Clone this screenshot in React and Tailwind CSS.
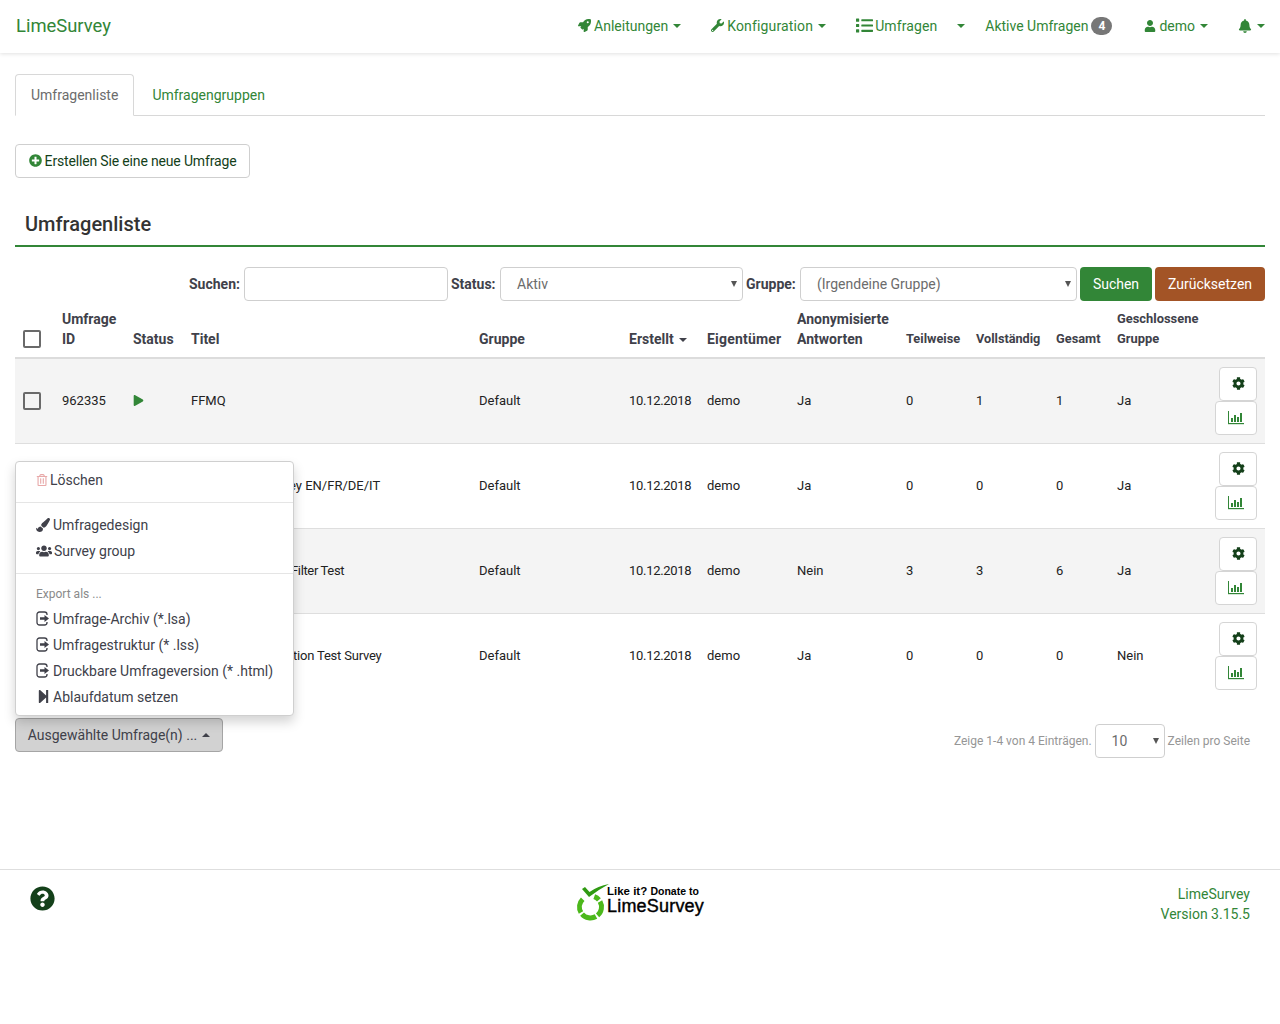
import { FaRocket, FaWrench, FaList, FaUser, FaBell, FaPlusCircle, FaCog, FaRegTrashAlt, FaPaintBrush, FaUsers, FaStepForward, FaQuestionCircle, FaPlay } from "react-icons/fa";

const rows = [
  { id: "962335", play: true, title: "FFMQ", pad: "pl-2", anon: "Ja", part: "0", full: "1", total: "1", closed: "Ja", shaded: true },
  { id: "", title: "ey EN/FR/DE/IT", pad: "pl-[106px]", anon: "Ja", part: "0", full: "0", total: "0", closed: "Ja" },
  { id: "", title: "Filter Test", pad: "pl-[108px] tracking-[-0.35px]", anon: "Nein", part: "3", full: "3", total: "6", closed: "Ja", shaded: true },
  { id: "", title: "tion Test Survey", pad: "pl-[110px] tracking-[-0.2px]", anon: "Ja", part: "0", full: "0", total: "0", closed: "Nein" },
];

function Caret({ up }) {
  return (
    <span className={`inline-block w-0 h-0 ml-[5px] align-middle border-x-4 border-x-transparent ${up ? "border-b-4 border-b-current" : "border-t-4 border-t-current"}`} />
  );
}

function ChartIcon() {
  return (
    <svg width="16" height="14" viewBox="0 0 16 14" fill="#328637">
      <rect x="0" y="0" width="1" height="13" />
      <rect x="0" y="12" width="16" height="1.2" />
      <rect x="3" y="7" width="2" height="4" />
      <rect x="6" y="4" width="2" height="7" />
      <rect x="9" y="6" width="2" height="5" />
      <rect x="12" y="2" width="2" height="9" />
    </svg>
  );
}

function ExportIcon() {
  return (
    <svg width="14" height="15" viewBox="0 0 14 15" className="mr-[3px] mb-[2px] shrink-0" fill="none">
      <path d="M11 4V3.5A2.5 2.5 0 0 0 8.5 1h-5A2.5 2.5 0 0 0 1 3.5v8A2.5 2.5 0 0 0 3.5 14h5a2.5 2.5 0 0 0 2.5-2.5V11" stroke="#40414a" strokeWidth="1.3" />
      <path d="M4 6.3h4.5V4L13 7.5 8.5 11V8.7H4z" fill="#40414a" />
    </svg>
  );
}

function NavItem({ icon, label, className = "" }) {
  return (
    <span className={`flex items-center text-[#328637] text-sm whitespace-nowrap ${className}`}>
      {icon}
      {label}
      <Caret />
    </span>
  );
}

function Select({ value, className }) {
  return (
    <div className={`relative h-[34px] border border-[#cfcfcf] rounded-[4px] bg-white pl-4 flex items-center text-sm text-[#6c6c6c] ${className}`}>
      {value}
      <span className="absolute right-[5px] top-[13px] w-0 h-0 border-x-[3px] border-x-transparent border-t-[6px] border-t-[#555]" />
    </div>
  );
}

function MenuItem({ icon, label, className = "" }) {
  return (
    <div className={`h-[26px] pl-5 flex items-center text-sm text-[#40414a] whitespace-nowrap ${className}`}>
      {icon}
      {label}
    </div>
  );
}

function Checkbox() {
  return <span className="block w-[18px] h-[18px] border-2 border-[#6a6a6a] rounded-[2px] bg-transparent" />;
}

function App() {
  return (
    <div className="relative min-h-[1024px] bg-white font-['Roboto',sans-serif] text-sm text-[#40414a]">
      {/* navbar */}
      <div className="h-[53px] flex items-center justify-between pl-4 pr-[15px] pb-[2px] bg-white shadow-[0_1px_4px_rgba(0,0,0,0.12)]">
        <span className="pt-[2px] text-[18.4px] text-[#328637]">LimeSurvey</span>
        <div className="flex items-center">
          <NavItem icon={<FaRocket className="mr-[3px] text-[13px]" />} label="Anleitungen" />
          <NavItem className="ml-[30px] tracking-[0.15px]" icon={<FaWrench className="mr-[3px] text-[13px]" />} label="Konfiguration" />
          <span className="ml-[30px] flex items-center text-[#328637] tracking-[0.1px]">
            <FaList className="mr-[2px] text-[17px]" />
            Umfragen
          </span>
          <span className="ml-[15px] text-[#328637] flex"><Caret /></span>
          <span className="ml-[20px] flex items-center text-[#328637] whitespace-nowrap">
            Aktive Umfragen
            <span className="ml-[3px] w-[21px] h-[18px] rounded-[9px] bg-[#777] text-white text-xs font-bold flex items-center justify-center">4</span>
          </span>
          <NavItem className="ml-[32px]" icon={<FaUser className="mr-[3px] text-[12px]" />} label="demo" />
          <span className="ml-[30px] flex items-center text-[#328637]">
            <FaBell className="text-sm" />
            <Caret />
          </span>
        </div>
      </div>

      <div className="px-[15px]">
        {/* tabs */}
        <div className="mt-[21px] h-[42px] flex border-b border-[#d8d8d8]">
          <div className="h-[42px] px-[15px] flex items-center border border-[#d8d8d8] border-b-white rounded-t-[4px] bg-white text-[#6c6c6c]">Umfragenliste</div>
          <div className="h-[41px] ml-[3px] px-[15px] flex items-center text-[#328637]">Umfragengruppen</div>
        </div>

        <div className="mt-[28px] w-[235px] h-[34px] flex items-center justify-center border border-[#cfcfcf] rounded-[4px] text-[#14401a] whitespace-nowrap tracking-[-0.16px]">
          <FaPlusCircle className="mr-[3px] mb-[2px] text-[13px] text-[#328637]" />
          Erstellen Sie eine neue Umfrage
        </div>

        <div className="mt-[32px] h-[37px] pl-[10px] border-b-2 border-[#328637] text-[20px] font-medium text-[#333] leading-[28px]">Umfragenliste</div>

        {/* filter */}
        <div className="mt-5 h-[34px] flex items-center justify-end font-bold text-[#40414a]">
          <span className="w-[52px] mr-[3px] whitespace-nowrap">Suchen:</span>
          <div className="w-[204px] h-[34px] border border-[#cfcfcf] rounded-[4px]" />
          <span className="w-[46px] ml-[3px] mr-[3px] whitespace-nowrap">Status:</span>
          <Select value="Aktiv" className="w-[243px] font-normal" />
          <span className="w-[51px] ml-[3px] mr-[3px] whitespace-nowrap">Gruppe:</span>
          <Select value="(Irgendeine Gruppe)" className="w-[277px] font-normal" />
          <div className="ml-[3px] w-[72px] h-[34px] rounded-[4px] bg-[#328637] text-white font-normal flex items-center justify-center">Suchen</div>
          <div className="ml-[3px] w-[110px] h-[34px] rounded-[4px] bg-[#a35426] text-white font-normal flex items-center justify-center">Zurücksetzen</div>
        </div>

        {/* table */}
        <table className="mt-1 w-[1250px] table-fixed border-collapse text-[13px] text-[#222]">
          <colgroup>
            <col className="w-[39px]" />
            <col className="w-[71px]" />
            <col className="w-[58px]" />
            <col className="w-[288px]" />
            <col className="w-[150px]" />
            <col className="w-[78px]" />
            <col className="w-[90px]" />
            <col className="w-[109px]" />
            <col className="w-[70px]" />
            <col className="w-[80px]" />
            <col className="w-[61px]" />
            <col className="w-[92px]" />
            <col />
          </colgroup>
          <thead>
            <tr className="h-[53px] border-b-2 border-[#dcdcdc] text-left text-sm text-[#40414a] leading-5">
              <th className="pl-2 align-bottom pb-[9px]"><Checkbox /></th>
              <th className="pl-2 pb-2 align-bottom font-bold">Umfrage<br />ID</th>
              <th className="pl-2 pb-2 align-bottom font-bold">Status</th>
              <th className="pl-2 pb-2 align-bottom font-bold">Titel</th>
              <th className="pl-2 pb-2 align-bottom font-bold">Gruppe</th>
              <th className="pl-2 pb-2 align-bottom font-bold whitespace-nowrap">Erstellt<Caret /></th>
              <th className="pl-2 pb-2 align-bottom font-bold tracking-[0.2px]">Eigentümer</th>
              <th className="pl-2 pb-2 align-bottom font-bold whitespace-nowrap">Anonymisierte<br />Antworten</th>
              <th className="pl-2 pb-2 align-bottom font-bold text-[12.8px]">Teilweise</th>
              <th className="pl-2 pb-2 align-bottom font-bold text-[12.7px]">Vollständig</th>
              <th className="pl-2 pb-2 align-bottom font-bold text-[12.8px]">Gesamt</th>
              <th className="pl-2 pb-2 align-bottom font-bold text-[12.9px] whitespace-nowrap">Geschlossene<br />Gruppe</th>
              <th />
            </tr>
          </thead>
          <tbody>
            {rows.map((row, index) => (
              <tr key={index} className={`h-[85px] ${row.shaded ? "bg-[#f4f4f4]" : "bg-white"} ${index < 3 ? "border-b border-[#dedede]" : ""}`}>
                <td className="pl-2 pt-[1px]"><Checkbox /></td>
                <td className="pl-2 pt-[2px]">{row.id}</td>
                <td className="pl-2">{row.play ? <FaPlay className="text-[11px] text-[#328637]" /> : null}</td>
                <td className={`pt-[2px] whitespace-nowrap ${row.pad}`}>{row.title}</td>
                <td className="pl-2 pt-[2px]">Default</td>
                <td className="pl-2 pt-[2px] tracking-[-0.3px]">10.12.2018</td>
                <td className="pl-2 pt-[2px]">demo</td>
                <td className="pl-2 pt-[2px]">{row.anon}</td>
                <td className="pl-2 pt-[2px]">{row.part}</td>
                <td className="pl-2 pt-[2px]">{row.full}</td>
                <td className="pl-2 pt-[2px]">{row.total}</td>
                <td className="pl-2 pt-[2px]">{row.closed}</td>
                <td className="pr-2">
                  <div className="flex flex-col items-end">
                    <div className="w-[38px] h-[34px] border border-[#d5d5d5] rounded-[4px] bg-white flex items-center justify-center">
                      <FaCog className="text-[13px] text-[#14401a]" />
                    </div>
                    <div className="w-[42px] h-[34px] border border-[#d5d5d5] rounded-[4px] bg-white flex items-center justify-center">
                      <ChartIcon />
                    </div>
                  </div>
                </td>
              </tr>
            ))}
          </tbody>
        </table>

        {/* bottom bar */}
        <div className="mt-[20px] h-[34px] flex items-start justify-between">
          <div className="w-[208px] h-[34px] border border-[#a5a5a5] rounded-[4px] bg-[#d2d2d2] flex items-center justify-center text-[#40414a] whitespace-nowrap">
            Ausgewählte Umfrage(n) ...<Caret up />
          </div>
          <div className="mt-[6px] flex items-center pr-[15px] text-xs text-[#969696] whitespace-nowrap">
            Zeige 1-4 von 4 Einträgen.
            <div className="relative ml-[3px] mr-[3px] w-[70px] h-[34px] border border-[#cfcfcf] rounded-[4px] bg-white pl-4 flex items-center text-sm text-[#6c6c6c]">
              10
              <span className="absolute right-[5px] top-[13px] w-0 h-0 border-x-[3px] border-x-transparent border-t-[6px] border-t-[#555]" />
            </div>
            Zeilen pro Seite
          </div>
        </div>
      </div>

      {/* dropdown over the table */}
      <div className="absolute left-[15px] top-[461px] w-[279px] h-[255px] bg-white border border-[#cfcfcf] rounded-[4px] shadow-[0_6px_12px_rgba(0,0,0,0.175)]">
        <MenuItem className="mt-[5px]" icon={<FaRegTrashAlt className="mr-[2px] text-[12px] text-[#e8a9a9]" />} label="Löschen" />
        <div className="mt-[9px] h-px bg-[#e5e5e5]" />
        <MenuItem className="mt-[9px]" icon={<FaPaintBrush className="mr-[3px] text-sm" />} label="Umfragedesign" />
        <MenuItem icon={<FaUsers className="mr-[2px] text-[16px]" />} label="Survey group" />
        <div className="mt-[9px] h-px bg-[#e5e5e5]" />
        <div className="mt-2 mb-px h-[23px] pl-5 flex items-center text-xs text-[#8a8a8a]">Export als ...</div>
        <MenuItem icon={<ExportIcon />} label="Umfrage-Archiv (*.lsa)" />
        <MenuItem icon={<ExportIcon />} label="Umfragestruktur (* .lss)" />
        <MenuItem icon={<ExportIcon />} label="Druckbare Umfrageversion (* .html)" />
        <MenuItem icon={<FaStepForward className="mr-[2px] mb-[2px] text-[15px]" />} label="Ablaufdatum setzen" />
      </div>

      {/* footer */}
      <div className="mt-[117px] h-[155px] border-t border-[#dedede] px-[30px] grid grid-cols-3">
        <FaQuestionCircle className="mt-4 text-[25px] text-[#14401a]" />
        <div className="mt-[14px] flex items-start justify-center text-black">
          <svg width="32" height="37" viewBox="0 0 32 37" className="overflow-visible shrink-0" fill="none" stroke="#4cb81b" strokeWidth="5">
            <path d="M6.72 15.22A11 11 0 0 0 4.97 28.5" />
            <path d="M6.07 30.07A11 11 0 0 0 20 32.53" />
            <path d="M21.57 31.43A11 11 0 0 0 24.03 17.5" />
            <path d="M22.93 15.93A11 11 0 0 0 18.26 12.66" />
            <path d="M6 5L9 3L13.5 8Q22 2 33 0Q22 6 13 13Z" fill="#2f9a12" stroke="none" />
          </svg>
          <div className="-ml-px flex flex-col font-['Liberation_Sans',sans-serif] font-bold">
            <span className="text-[11.5px] leading-[11px] mt-[2px] whitespace-nowrap">Like it? <span className="text-[10.5px]">Donate to</span></span>
            <span className="text-[18px] leading-[19px] font-normal tracking-[0.2px] [-webkit-text-stroke:0.4px_black]">LimeSurvey</span>
          </div>
        </div>
        <div className="mt-[14px] text-right text-[#328637] leading-5">LimeSurvey<br />Version 3.15.5</div>
      </div>
    </div>
  );
}

export default App;
